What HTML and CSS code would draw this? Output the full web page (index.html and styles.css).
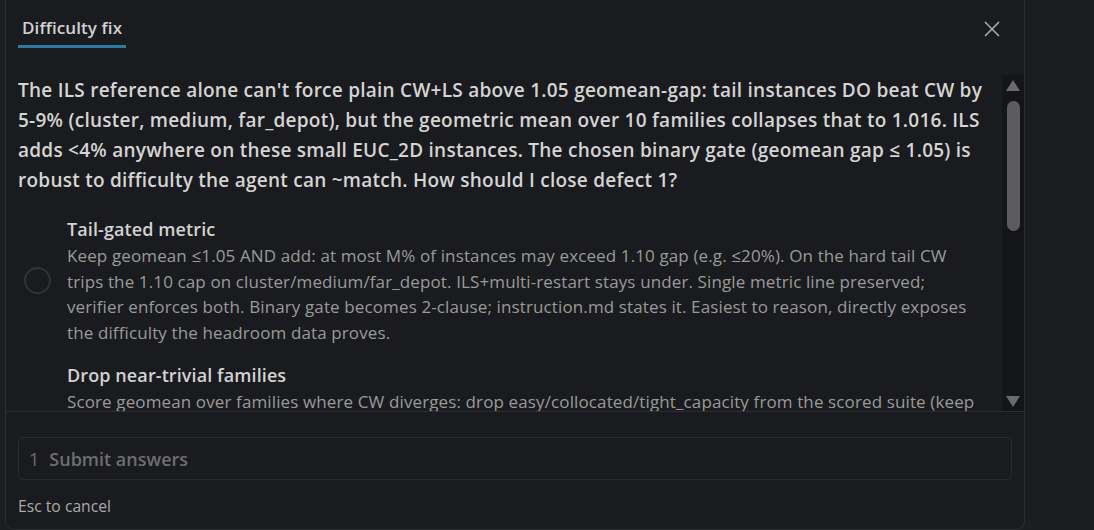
FILE: index.html
```html
<!DOCTYPE html>
<html>
<head>
<meta charset="utf-8">
<link rel="stylesheet" href="styles.css">
</head>
<body>
<div class="panel">
  <div class="header">
    <div class="tab">Difficulty fix</div>
    <button class="close" aria-label="Close">
      <svg width="16" height="16" viewBox="0 0 16 16"><path d="M1 1L15 15M15 1L1 15" stroke="#a9a9a9" stroke-width="1.6" fill="none"/></svg>
    </button>
  </div>
  <div class="scroller">
    <div class="content">
      <p class="question">The ILS reference alone can't force plain CW+LS above 1.05 geomean-gap: tail instances DO beat CW by 5-9% (cluster, medium, far_depot), but the geometric mean over 10 families collapses that to 1.016. ILS adds &lt;4% anywhere on these small EUC_2D instances. The chosen binary gate (geomean gap ≤ 1.05) is robust to difficulty the agent can ~match. How should I close defect 1?</p>
      <div class="option">
        <div class="radio-col"><span class="radio"></span></div>
        <div class="option-text">
          <div class="option-title">Tail-gated metric</div>
          <div class="option-desc">Keep geomean ≤1.05 AND add: at most M% of instances may exceed 1.10 gap (e.g. ≤20%). On the hard tail CW trips the 1.10 cap on cluster/medium/far_depot. ILS+multi-restart stays under. Single metric line preserved; verifier enforces both. Binary gate becomes 2-clause; instruction.md states it. Easiest to reason, directly exposes the difficulty the headroom data proves.</div>
        </div>
      </div>
      <div class="option">
        <div class="radio-col"><span class="radio"></span></div>
        <div class="option-text">
          <div class="option-title">Drop near-trivial families</div>
          <div class="option-desc">Score geomean over families where CW diverges: drop easy/collocated/tight_capacity from the scored suite (keep them as sanity checks only). Then the geomean reflects only the families where the heuristic actually struggles, so the same binary gate stays meaningful. The instruction.md lists the scored families explicitly and the verifier reports the excluded ones separately for transparency.</div>
        </div>
      </div>
    </div>
    <div class="scrollbar">
      <span class="arrow up"></span>
      <div class="track"><span class="thumb"></span></div>
      <span class="arrow down"></span>
    </div>
  </div>
  <div class="footer">
    <div class="submit"><span class="num">1</span><span class="label">Submit answers</span></div>
    <div class="hint">Esc to cancel</div>
  </div>
</div>
</body>
</html>
```
FILE: styles.css
```css
* { box-sizing: border-box; }
html, body {
  margin: 0;
  padding: 0;
  background: #1c1d20;
  height: 530px;
  overflow: hidden;
  font-family: "Open Sans", "Noto Sans", "Liberation Sans", sans-serif;
}
body { padding-left: 5px; }
.panel {
  width: 1020px;
  height: 537px;
  margin-top: -7px;
  background: #1a1b1e;
  border: 1px solid #2d2e32;
  border-radius: 9px;
  display: flex;
  flex-direction: column;
  overflow: hidden;
}
.header {
  height: 81px;
  flex: none;
  display: flex;
  align-items: flex-start;
  justify-content: space-between;
  padding: 22px 24px 0 12px;
}
.tab {
  color: #d2d2d2;
  font-size: 17px;
  letter-spacing: 0.1px;
  font-weight: 600;
  padding: 0 4px 5px;
  line-height: 24px;
  border-bottom: 3px solid #2c7aa3;
}
.close {
  background: none;
  border: 0;
  padding: 0;
  margin-top: 5px;
  width: 16px;
  height: 16px;
  display: flex;
}
.scroller {
  height: 337px;
  flex: none;
  display: flex;
  border-bottom: 1px solid #2d2e32;
  overflow: hidden;
}
.content {
  flex: 1;
  padding: 0 12px 0 12px;
  overflow: hidden;
}
.question {
  margin: 0 0 21px;
  color: #d4d4d4;
  font-size: 19px;
  letter-spacing: 0.25px;
  font-weight: 600;
  line-height: 30px;
}
.option {
  display: flex;
  align-items: center;
  margin-bottom: 16px;
}
.radio-col {
  width: 49px;
  padding-left: 6px;
  flex: none;
}
.radio {
  display: block;
  width: 27px;
  height: 27px;
  border: 2px solid #323336;
  border-radius: 50%;
}
.option-text {
  flex: 1;
  padding-right: 9px;
}
.option-title {
  color: #d2d2d2;
  font-size: 18px;
  letter-spacing: 0.1px;
  font-weight: 600;
  line-height: 27px;
}
.option-desc {
  color: #9a9a9a;
  font-size: 17px;
  letter-spacing: 0.12px;
  line-height: 25.7px;
}
.scrollbar {
  width: 22px;
  flex: none;
  background: #141518;
  display: flex;
  flex-direction: column;
  align-items: center;
  padding: 5px 0 4px;
}
.arrow {
  width: 0;
  height: 0;
  border-left: 7px solid transparent;
  border-right: 7px solid transparent;
}
.arrow.up { border-bottom: 11px solid #6a6a6d; }
.arrow.down { border-top: 11px solid #6a6a6d; }
.track {
  flex: 1;
  width: 100%;
  display: flex;
  justify-content: center;
  padding-top: 10px;
}
.thumb {
  width: 13px;
  height: 130px;
  background: #5c5c60;
  border-radius: 7px;
}
.footer {
  padding: 25px 12px 0;
}
.submit {
  height: 43px;
  border: 1px solid #2a2b2f;
  border-radius: 5px;
  display: flex;
  align-items: center;
  padding-left: 10px;
  font-size: 18px;
  font-weight: 600;
  color: #6e6e70;
}
.num { margin-right: 10px; font-weight: 400; }
.hint {
  margin-top: 16px;
  font-size: 15.7px;
  color: #a9a9ab;
  line-height: 20px;
}
```
